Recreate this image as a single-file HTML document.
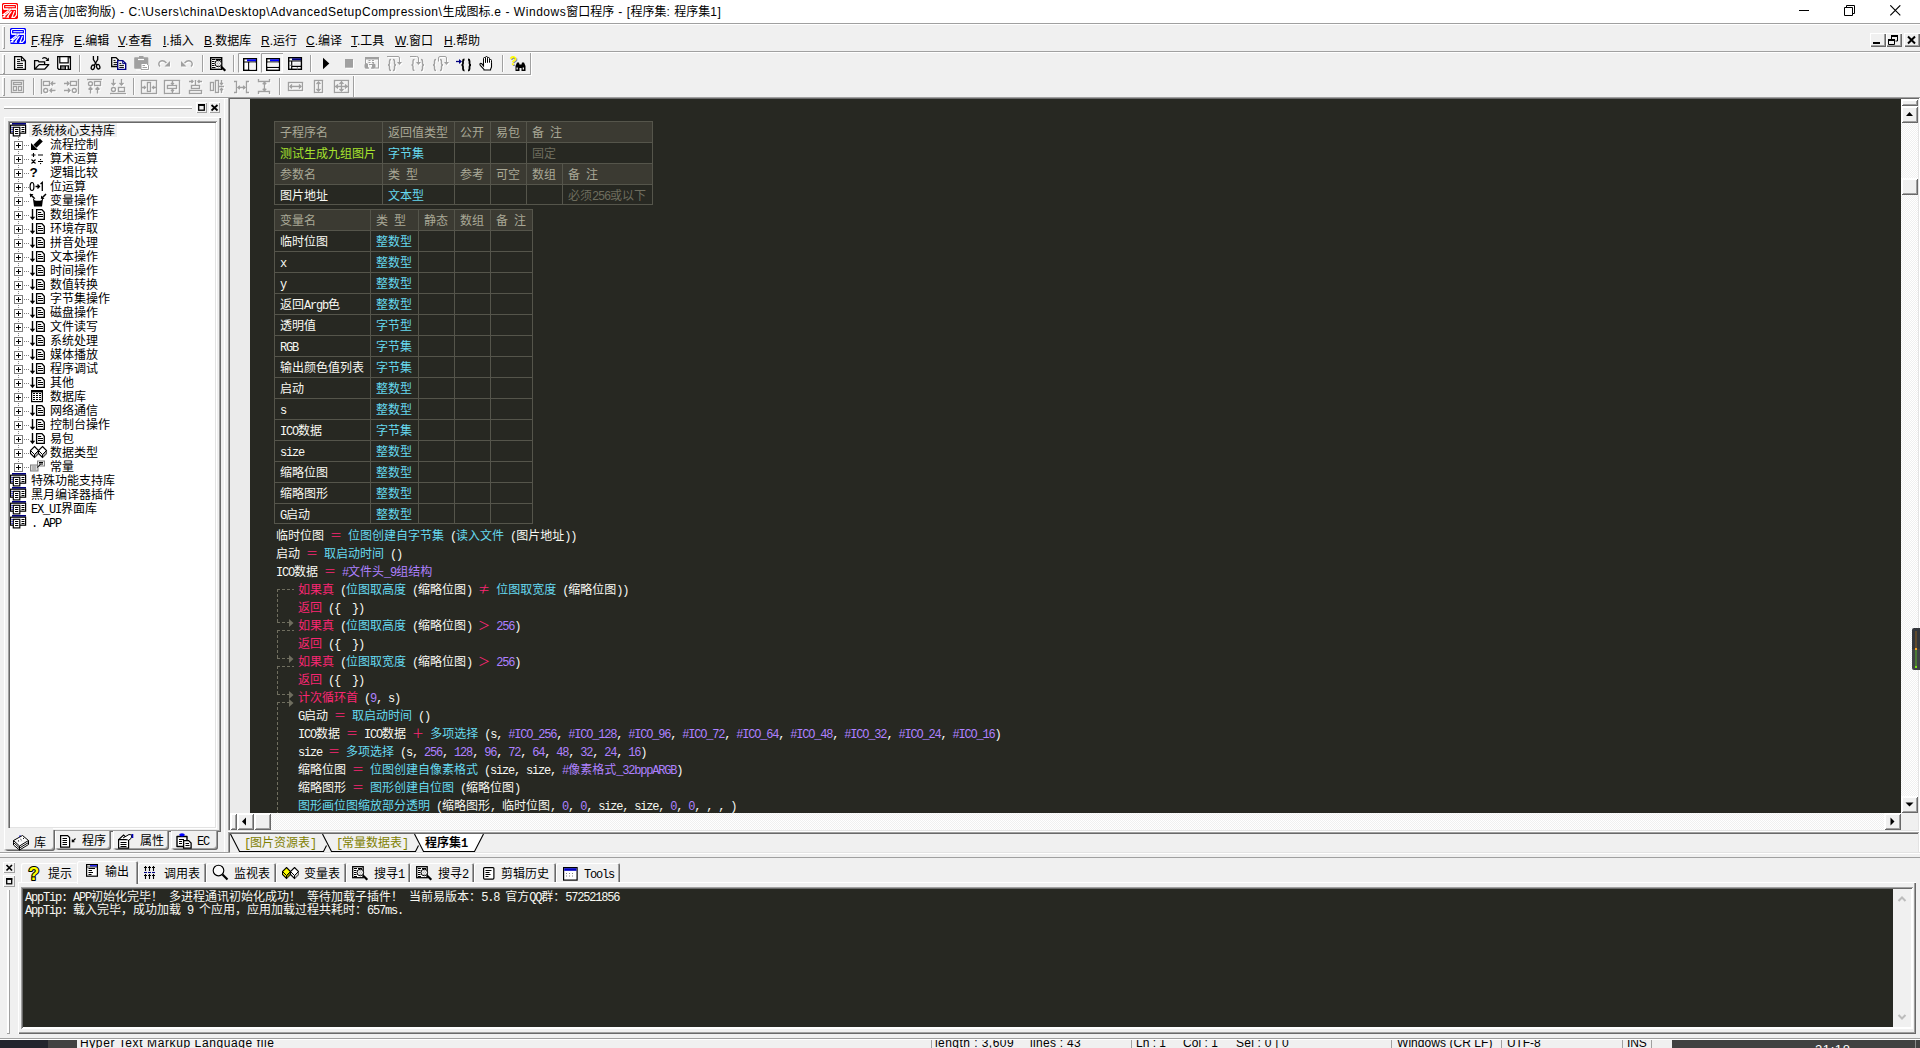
<!DOCTYPE html>
<html lang="zh-CN"><head><meta charset="utf-8"><title>易语言</title>
<style>

html,body{margin:0;padding:0}
body{width:1920px;height:1048px;overflow:hidden;position:relative;background:#f0f0f0;
 font-family:"Liberation Sans","Noto Sans CJK SC",sans-serif;font-size:12px;color:#000}
div,span,i,b,svg{position:absolute;box-sizing:border-box}
i{position:static;font-style:normal;font-family:"Liberation Mono",monospace;letter-spacing:-1.2px}
b{position:static}
.ss{font-family:"Liberation Mono","Noto Sans CJK SC",monospace;font-size:12px;white-space:pre;line-height:18px}
.tx{white-space:pre}
/* code colours */
.k{color:#f92672;position:static}
.f{color:#66d9ef;position:static}
.c{color:#ae81ff;position:static}
.w{color:#f8f8f2;position:static}
.g{color:#a6e22e;position:static}

.b3{background:#f0f0f0;box-shadow:inset 1px 1px 0 #fff,inset -1px -1px 0 #696969,inset -2px -2px 0 #a0a0a0}
.hl{height:1px;left:0;width:1920px}
#title{left:0;top:0;width:1920px;height:23px;background:#fff}
#ttext{left:23px;top:4px;height:16px;line-height:16px;white-space:pre;font-size:12px;color:#000}
.mi{top:33px;height:16px;line-height:16px;white-space:pre;font-size:12px}
.mi u{text-decoration:underline;text-underline-offset:1px}
.grip{width:3px;background:#f0f0f0;box-shadow:inset 1px 1px 0 #fff,inset -1px -1px 0 #a0a0a0}
.sep{width:2px;border-left:1px solid #a0a0a0;border-right:1px solid #fff}

#ttext b{font-weight:normal;letter-spacing:.54px}

.tree{left:8px;top:121px;width:209px;height:708px;background:#fff;box-shadow:inset 1px 1px 0 #a0a0a0,inset -1px -1px 0 #fff,inset 2px 2px 0 #696969,inset -2px -2px 0 #e3e3e3}
.tr{left:0;height:14px;line-height:18px;font-size:12px;white-space:pre;font-family:"Liberation Mono","Noto Sans CJK SC",monospace}
.tr span{position:static}
.pm{width:9px;height:9px;border:1px solid #808080;background:#fff}
.pm:before{content:"";position:absolute;left:1px;top:3px;width:5px;height:1px;background:#000}
.pm:after{content:"";position:absolute;left:3px;top:1px;width:1px;height:5px;background:#000}
.ltab{top:831px;height:19px;background:#f0f0f0;border-radius:0 0 3px 3px;box-shadow:inset 1px 0 0 #fff,inset -1px -1px 0 #696969,inset -2px -2px 0 #a0a0a0}
.lt{font-size:12px;line-height:18px;white-space:pre;font-family:"Liberation Mono","Noto Sans CJK SC",monospace}

#ed{left:230px;top:99px;width:1671px;height:714px;background:#272822;overflow:hidden}
.cd{font-family:"Liberation Mono","Noto Sans CJK SC",monospace;font-size:12px;line-height:22px;height:18px;white-space:pre;color:#f8f8f2}
.cd span{position:static}
.tb{background:#55554b}
.tb div{height:20px;line-height:24px;font-family:"Liberation Mono","Noto Sans CJK SC",monospace;font-size:12px;white-space:pre;padding-left:5px;overflow:hidden}
.th{background:#3b3a32;color:#a9a896}
.td{background:#272822;color:#f8f8f2}
.sbv{background:#f7f7f7}

.trk{background-color:#fff;background-image:linear-gradient(45deg,#f0f0f0 25%,transparent 25%,transparent 75%,#f0f0f0 75%),linear-gradient(45deg,#f0f0f0 25%,transparent 25%,transparent 75%,#f0f0f0 75%);background-size:2px 2px;background-position:0 0,1px 1px}
.sbb{background:#f0f0f0;box-shadow:inset 1px 1px 0 #fff,inset -1px -1px 0 #696969,inset 2px 2px 0 #fff,inset -2px -2px 0 #a0a0a0}
.etab{top:834px;height:18px;line-height:20px;font-size:12px;white-space:pre;font-family:"Liberation Mono","Noto Sans CJK SC",monospace}

.btab{top:863px;height:19px;background:#f0f0f0;box-shadow:inset 1px 1px 0 #fff,inset -1px 0 0 #696969,inset -2px 0 0 #a0a0a0;border-radius:2px 2px 0 0}
.bt{font-size:12px;line-height:18px;white-space:pre;font-family:"Liberation Mono","Noto Sans CJK SC",monospace}
#out{left:23px;top:889px;width:1870px;height:138px;background:#272822;overflow:hidden}
.ol{left:2px;height:13px;line-height:17px;font-size:12px;white-space:pre;color:#f8f8f2;font-family:"Liberation Mono","Noto Sans CJK SC",monospace}
.sb{top:-5px;height:16px;line-height:16px;font-size:12px;white-space:pre;color:#000;letter-spacing:.6px}

.fw{position:static;line-height:0;font-family:"Noto Sans CJK SC",sans-serif}

</style></head>
<body>
<div id="title"><svg style="left:2px;top:3px" width="16" height="16" viewBox="0 0 16 16"><path d="M1 0h14l1 1v14l-1 1h-14l-1-1v-14z" fill="#ff0000"/><rect x="1.500" y="1.500" width="13" height="4.600" rx="1.200" fill="none" stroke="#fff" stroke-width="1.100"/><path d="M3.300 3.700h9.500" stroke="#fff" stroke-width="1"/><path d="M1.500 6.200h4.700M10 6.200h4.500M6.500 7.500l-5.300 4h2M8.800 6l-1.500 1.800M7.500 8.500l-6.300 5.300h2.300M9.500 8.200l-4.300 6h1.800M12.500 8l-2.500 6.300h2.500l2-2.300v-6" stroke="#fff" stroke-width="1.200" fill="none"/></svg><span id="ttext">易语言<b>(</b>加密狗版<b>) - C:\Users\china\Desktop\AdvancedSetupCompression\</b>生成图标<b>.e - Windows</b>窗口程序<b> - [</b>程序集<b>: </b>程序集<b>1]</b></span><svg style="left:1799px;top:5px" width="102" height="11" viewBox="0 0 102 11"><path d="M0 5.5h10" stroke="#000"/><path d="M45.5 2.5h8v8h-8zM47.5 2.5v-2h8v8h-2" fill="none" stroke="#000"/><path d="M91.3 0.3l10 10M101.3 0.3l-10 10" stroke="#000" stroke-width="1.1"/></svg></div>
<div class="hl" style="top:23px;background:#a0a0a0"></div><div class="hl" style="top:24px;background:#fff"></div>
<div class="grip" style="left:2px;top:26px;height:23px"></div>
<svg style="left:10px;top:28px" width="16" height="16" viewBox="0 0 16 16"><path d="M1 0h14l1 1v14l-1 1h-14l-1-1v-14z" fill="#0000ff"/><rect x="1.500" y="1.500" width="13" height="4.600" rx="1.200" fill="none" stroke="#fff" stroke-width="1.100"/><path d="M3.300 3.700h9.500" stroke="#fff" stroke-width="1"/><path d="M1.500 6.200h4.700M10 6.200h4.500M6.500 7.500l-5.300 4h2M8.800 6l-1.500 1.800M7.500 8.500l-6.300 5.300h2.300M9.500 8.200l-4.300 6h1.800M12.500 8l-2.500 6.300h2.500l2-2.300v-6" stroke="#fff" stroke-width="1.200" fill="none"/></svg>
<span class="mi" style="left:31px"><u>F</u>.程序</span>
<span class="mi" style="left:74px"><u>E</u>.编辑</span>
<span class="mi" style="left:118px"><u>V</u>.查看</span>
<span class="mi" style="left:163px"><u>I</u>.插入</span>
<span class="mi" style="left:204px"><u>B</u>.数据库</span>
<span class="mi" style="left:261px"><u>R</u>.运行</span>
<span class="mi" style="left:306px"><u>C</u>.编译</span>
<span class="mi" style="left:351px"><u>T</u>.工具</span>
<span class="mi" style="left:395px"><u>W</u>.窗口</span>
<span class="mi" style="left:444px"><u>H</u>.帮助</span>
<div class="b3" style="left:1870px;top:33px;width:16px;height:14px"><svg style="left:0;top:0" width="16" height="14"><path d="M3 10h7" stroke="#000" stroke-width="2"/></svg></div>
<div class="b3" style="left:1886px;top:33px;width:16px;height:14px"><svg style="left:0;top:0" width="16" height="14"><path d="M5.5 3h6M5.5 4v2M11.500 4v4h-2M2.500 7h6M2.5 8v3.5h6v-3.500" stroke="#000" stroke-width="1" fill="none"/><path d="M5 3h7M2 7h7" stroke="#000" stroke-width="2"/></svg></div>
<div class="b3" style="left:1904px;top:33px;width:16px;height:14px"><svg style="left:0;top:0" width="16" height="14"><path d="M4 3.500l7 7M11 3.500l-7 7" stroke="#000" stroke-width="2"/></svg></div>
<div class="hl" style="top:51px;background:#a0a0a0"></div><div class="hl" style="top:52px;background:#fff"></div>
<div class="grip" style="left:2px;top:54px;height:20px"></div>
<div class="hl" style="top:74px;background:#a0a0a0;width:531px"></div><div class="hl" style="top:75px;background:#fff;width:532px"></div>
<div class="grip" style="left:2px;top:77px;height:19px"></div>
<div class="hl" style="top:97px;background:#a0a0a0"></div><div class="hl" style="top:98px;background:#fff"></div>
<svg style="left:0;top:52px" width="540" height="46" viewBox="0 52 540 46"><path d="M79.5 55v17" stroke="#a0a0a0"/><path d="M80.5 55v17" stroke="#fff"/><path d="M202.5 55v17" stroke="#a0a0a0"/><path d="M203.5 55v17" stroke="#fff"/><path d="M233.5 55v17" stroke="#a0a0a0"/><path d="M234.5 55v17" stroke="#fff"/><path d="M310.5 55v17" stroke="#a0a0a0"/><path d="M311.5 55v17" stroke="#fff"/><path d="M502.5 55v17" stroke="#a0a0a0"/><path d="M503.5 55v17" stroke="#fff"/><path d="M530.5 53v22" stroke="#a0a0a0"/><path d="M531.5 53v22" stroke="#fff"/><path d="M33.5 78v17" stroke="#a0a0a0"/><path d="M34.5 78v17" stroke="#fff"/><path d="M133.5 78v17" stroke="#a0a0a0"/><path d="M134.5 78v17" stroke="#fff"/><path d="M279.5 78v17" stroke="#a0a0a0"/><path d="M280.5 78v17" stroke="#fff"/><path d="M353.5 76v21" stroke="#a0a0a0"/><path d="M354.5 76v21" stroke="#fff"/><path d="M14.6 56.600h6.800l4 4.200v8.600h-10.800z" fill="#fff" stroke="#000" stroke-width="1.300"/><path d="M21.400 56.600v4.200h4" fill="none" stroke="#000" stroke-width="1.100"/><path d="M17 59.400h3.200M17 61.400h3.200M17 63.400h6M17 65.400h6M17 67.400h6" stroke="#000" stroke-width="1"/><path d="M34.600 69.200v-8.600h3.400l1 1.300h5.600v2.600" fill="none" stroke="#000" stroke-width="1.300"/><path d="M34.600 69.200l4.600-4.600h9.600l-4.200 4.600z" fill="#fff" stroke="#000" stroke-width="1.300" stroke-linejoin="round"/><path d="M42.300 58.600q2.700-2.200 5.400 1" fill="none" stroke="#000" stroke-width="1.200"/><path d="M48.900 57.600v3.400h-3.400z" fill="#000"/><path d="M57.700 56.600h12.700v12.700h-11.700l-1-1z" fill="#fff" stroke="#000" stroke-width="1.300"/><path d="M59.800 56.600v6.200h8.400v-6.200" fill="none" stroke="#000" stroke-width="1.200"/><rect x="60" y="65.300" width="9" height="4.400" fill="#000"/><rect x="61.300" y="66.400" width="3.400" height="2.800" fill="#808080"/><rect x="66" y="66.400" width="1.600" height="2.800" fill="#fff"/><rect x="69" y="57.300" width="1" height="1" fill="#000"/><path d="M93.400 56v3.500l3.300 5.500M97.700 56v3.500l-3.300 5.500" fill="none" stroke="#000" stroke-width="1.300"/><ellipse cx="92.900" cy="67.300" rx="1.600" ry="2.300" fill="none" stroke="#000" stroke-width="1.300" transform="rotate(20 92.900 67.300)"/><ellipse cx="98.200" cy="66.700" rx="1.600" ry="2.300" fill="none" stroke="#000" stroke-width="1.300" transform="rotate(-20 98.200 66.700)"/><path d="M111.700 57.600h4.300l2.500 2.500v6.400h-6.800z" fill="#fff" stroke="#000" stroke-width="1.300"/><path d="M113.500 60.400h2M113.500 62.400h4M113.500 64.400h4" stroke="#000"/><path d="M117.700 60.600h5l3 3v5.800h-8z" fill="#fff" stroke="#000080" stroke-width="1.400"/><path d="M122.700 60.600v3h3" fill="none" stroke="#000080"/><path d="M119.300 63.400h2M119.300 65.400h4.600M119.300 67.400h4.600" stroke="#000"/><path d="M135 58h12.500v10h-12.500z" fill="#a0a0a0" stroke="#a0a0a0" stroke-width="1.600" stroke-linejoin="round"/><rect x="139" y="56" width="4.500" height="2" fill="#a0a0a0"/><path d="M138 59.500h6" stroke="#fff" stroke-width="1.200"/><path d="M141 63.500h5.500l2 2v4h-7.500z" fill="#fff" stroke="#a0a0a0"/><path d="M142.500 65.500h2.500M142.500 67.500h4.500" stroke="#a0a0a0"/><path d="M136 70h5M149.500 66v4.500h-8" stroke="#fff" fill="none"/><g transform="translate(1,1)" stroke="#fff" fill="none" color="#fff"><path d="M160 66.500q-2.500-2.500 0-5 3-2 6.500 1.500" stroke-width="1.400"/><path d="M170 61v5.500h-5.500z" fill="currentColor" stroke="none"/></g><g stroke="#a0a0a0" fill="none" color="#a0a0a0"><path d="M160 66.500q-2.500-2.500 0-5 3-2 6.500 1.500" stroke-width="1.400"/><path d="M170 61v5.500h-5.500z" fill="currentColor" stroke="none"/></g><g transform="translate(1,1)" stroke="#fff" fill="none" color="#fff"><path d="M191 66.500q2.500-2.500 0-5-3-2-6.500 1.500" stroke-width="1.400"/><path d="M181 61v5.500h5.500z" fill="currentColor" stroke="none"/></g><g stroke="#a0a0a0" fill="none" color="#a0a0a0"><path d="M191 66.500q2.500-2.500 0-5-3-2-6.500 1.500" stroke-width="1.400"/><path d="M181 61v5.500h5.500z" fill="currentColor" stroke="none"/></g><rect x="210.700" y="57.700" width="11" height="11.600" fill="#fff" stroke="#000" stroke-width="1.400"/><path d="M212 59.500h3.500M212 61.500h2.500M212 63.500h2.500M212 65.500h2.500M212 67.500h3.500M216 59.500h5" stroke="#000"/><circle cx="218.300" cy="63.500" r="3.300" fill="#f0f0f0" stroke="#000" stroke-width="1"/><path d="M217.500 61.800h1.600M216.800 63.500h.8M219 63.500h.8M217.500 65.300h1.600" stroke="#808080" stroke-width=".8"/><path d="M221 66.500l4.300 4.200" stroke="#000" stroke-width="2.200"/><rect x="238" y="53" width="22" height="20" fill="#f8f8f8"/><path d="M238.5 73v-19.500h21.500" fill="none" stroke="#a0a0a0"/><path d="M259.5 54v18.500h-21" fill="none" stroke="#fff"/><rect x="261" y="53" width="22" height="20" fill="#f8f8f8"/><path d="M261.5 73v-19.500h21.500" fill="none" stroke="#a0a0a0"/><path d="M282.5 54v18.500h-21" fill="none" stroke="#fff"/><rect x="243.700" y="58.700" width="12.700" height="11.600" fill="#fff" stroke="#000" stroke-width="1.400"/><rect x="247" y="59.300" width="9" height="2" fill="#0000ff"/><path d="M243.500 62h13M248.700 62v8.500" stroke="#000" stroke-width="1.200"/><rect x="249.500" y="62.700" width="6.300" height="7" fill="#f4f4f4"/><rect x="266.700" y="58.700" width="12.700" height="11.600" fill="#fff" stroke="#000" stroke-width="1.400"/><rect x="270" y="59.300" width="9" height="2" fill="#0000ff"/><path d="M266.500 62h13M266.500 67.400h13" stroke="#000" stroke-width="1.200"/><rect x="267.500" y="62.700" width="11.300" height="4" fill="#f4f4f4"/><rect x="288.700" y="57.700" width="12.700" height="11.600" fill="#fff" stroke="#000" stroke-width="1.400"/><rect x="292" y="58.300" width="9" height="2" fill="#000080"/><path d="M288.500 61h13M291.700 61v8.500M291.700 66.400h10" stroke="#000" stroke-width="1.200"/><path d="M289 65.300h2.500M297.300 67v2.500" stroke="#808080"/><rect x="293.800" y="62.800" width="6" height="2.200" fill="#ececec"/><path d="M323 57.700v11.600l6.300-5.800z" fill="#000"/><rect x="346" y="60" width="8" height="8.700" fill="#fff"/><rect x="345" y="59" width="8" height="8.700" fill="#a0a0a0"/><g transform="translate(1,1)" stroke="#fff" fill="none" color="#fff"><rect x="365.500" y="57.500" width="13" height="10.500"/><path d="M365 58.500h14" stroke-width="2"/><path d="M368.500 60.500h2M372 60.500h2M368.500 62.500h2M372 62.500h2M369 64.500h4"/><path d="M364.500 64.500l2-1.500 1.500 1v3l2 2.500 2-2.500v-3l1.500-1 2 1.500v3l-2 1h-7l-2-1z" fill="currentColor" stroke="none"/></g><g stroke="#a0a0a0" fill="none" color="#a0a0a0"><rect x="365.500" y="57.500" width="13" height="10.500"/><path d="M365 58.500h14" stroke-width="2"/><path d="M368.500 60.500h2M372 60.500h2M368.500 62.500h2M372 62.500h2M369 64.500h4"/><path d="M364.500 64.500l2-1.500 1.500 1v3l2 2.500 2-2.500v-3l1.500-1 2 1.500v3l-2 1h-7l-2-1z" fill="currentColor" stroke="none"/></g><path d="M370 66.500l1.300 1.500-1.300 1.500-1.300-1.500z" fill="#fff"/><g transform="translate(1,1)" stroke="#fff" fill="none" color="#fff"><path d="M391 59.5q-1.500 0-1.500 1.500v2.5q0 1.500-1.500 1.500q1.500 0 1.500 1.500v2.5q0 1.500 1.500 1.500M393 59.5q1.500 0 1.500 1.500v2.5q0 1.500 1.500 1.500q-1.500 0-1.500 1.500v2.5q0 1.500-1.500 1.500" stroke-width="1.400"/><path d="M387 56.500h11q1.500 0 1.500 1.500v5" /><path d="M397 62h5l-2.500 3z" fill="currentColor" stroke="none"/></g><g stroke="#a0a0a0" fill="none" color="#a0a0a0"><path d="M391 59.5q-1.500 0-1.500 1.500v2.5q0 1.500-1.500 1.500q1.500 0 1.500 1.500v2.5q0 1.500 1.500 1.500M393 59.5q1.500 0 1.500 1.500v2.5q0 1.500 1.500 1.500q-1.500 0-1.500 1.500v2.5q0 1.500-1.500 1.500" stroke-width="1.400"/><path d="M387 56.500h11q1.500 0 1.500 1.500v5" /><path d="M397 62h5l-2.500 3z" fill="currentColor" stroke="none"/></g><g transform="translate(1,1)" stroke="#fff" fill="none" color="#fff"><path d="M414.5 59.5q-1.500 0-1.500 1.500v2.5q0 1.500-1.500 1.500q1.500 0 1.500 1.500v2.5q0 1.500 1.500 1.500M421 59.5q1.500 0 1.500 1.500v2.5q0 1.500 1.500 1.500q-1.500 0-1.500 1.500v2.5q0 1.500-1.500 1.500" stroke-width="1.400"/><path d="M410 56.500h6.500q2 0 2 1.500v5"/><path d="M416 62h5l-2.500 3z" fill="currentColor" stroke="none"/></g><g stroke="#a0a0a0" fill="none" color="#a0a0a0"><path d="M414.5 59.5q-1.500 0-1.500 1.500v2.5q0 1.500-1.500 1.500q1.500 0 1.500 1.500v2.5q0 1.500 1.500 1.500M421 59.5q1.500 0 1.500 1.500v2.5q0 1.500 1.500 1.500q-1.500 0-1.500 1.500v2.5q0 1.500-1.500 1.500" stroke-width="1.400"/><path d="M410 56.500h6.500q2 0 2 1.500v5"/><path d="M416 62h5l-2.500 3z" fill="currentColor" stroke="none"/></g><g transform="translate(1,1)" stroke="#fff" fill="none" color="#fff"><path d="M436 59.5q-1.500 0-1.500 1.500v2.5q0 1.500-1.500 1.500q1.500 0 1.500 1.500v2.5q0 1.500 1.500 1.500M440 59.5q1.500 0 1.500 1.500v2.5q0 1.500 1.500 1.500q-1.500 0-1.500 1.500v2.5q0 1.500-1.500 1.500" stroke-width="1.400"/><path d="M438.500 61.500v-3.500q0-1.500 1.500-1.500h5q1.500 0 1.500 1.500v4"/><path d="M444 62h5l-2.500 3z" fill="currentColor" stroke="none"/></g><g stroke="#a0a0a0" fill="none" color="#a0a0a0"><path d="M436 59.5q-1.500 0-1.500 1.500v2.5q0 1.500-1.500 1.500q1.500 0 1.500 1.500v2.5q0 1.500 1.500 1.500M440 59.5q1.500 0 1.500 1.500v2.5q0 1.500 1.500 1.500q-1.500 0-1.500 1.500v2.5q0 1.500-1.500 1.500" stroke-width="1.400"/><path d="M438.500 61.500v-3.500q0-1.500 1.500-1.500h5q1.500 0 1.500 1.500v4"/><path d="M444 62h5l-2.500 3z" fill="currentColor" stroke="none"/></g><path d="M456 61.500h5" stroke="#000080" stroke-width="1.300"/><path d="M459 59l3 2.500-3 2.500z" fill="#000080"/><path d="M464.5 59.5q-1.500 0-1.500 1.500v2.5q0 1.500-1.500 1.500q1.500 0 1.500 1.500v2.5q0 1.500 1.500 1.500M468 59.5q1.500 0 1.500 1.500v2.5q0 1.500 1.500 1.500q-1.500 0-1.500 1.500v2.5q0 1.500-1.500 1.500" fill="none" stroke="#000" stroke-width="1.800"/><g fill="#fff" stroke="#000" stroke-width="1"><rect x="483.500" y="57.500" width="2" height="9" rx="1"/><rect x="485.500" y="56.500" width="2" height="10" rx="1"/><rect x="487.500" y="57.500" width="2" height="9" rx="1"/><rect x="489.500" y="59.500" width="2" height="8" rx="1"/><path d="M483.500 63v3l-1.800-2.300q-1-.8-1.600 0-.4.800.2 1.600l3.700 4.200v.5h6.500v-.5l1-2.500v-4.500" stroke-width="1.100"/></g><text x="510.500" y="65.500" font-family="Liberation Sans,sans-serif" font-weight="bold" font-size="12" fill="#808080">?</text><text x="509.800" y="64.800" font-family="Liberation Sans,sans-serif" font-weight="bold" font-size="12" fill="#ffff00">?</text><path d="M515.500 71v-5l1.500-3.500h2l.5 2h2l.5-2h2l1.500 3.500v5h-4v-3h-2v3z" fill="#000"/><path d="M516.500 67.500h1.300v2h-1.300zM522.700 67.500h1.300v2h-1.300z" fill="#f0f0f0"/><g transform="translate(1,1)" stroke="#fff" fill="none" color="#fff"><g stroke-width="1.35"><rect x="11.500" y="80.500" width="12" height="12"/><rect x="13.500" y="82.500" width="8" height="2"/><rect x="13.500" y="86.500" width="3" height="4"/><rect x="18.500" y="86.500" width="3" height="4"/><path d="M41.500 79v15"/><rect x="43.500" y="81.500" width="6" height="4"/><circle cx="45.700" cy="90.500" r="2"/><path d="M55.5 83.5L51 83.5M53.0 81.5L51 83.5L53.0 85.5M55.5 90.5L50 90.5M52.0 88.5L50 90.5L52.0 92.5"/><path d="M78.500 79v15"/><rect x="70.500" y="81.500" width="6" height="4"/><circle cx="74.300" cy="90.500" r="2"/><path d="M64 83.5L69 83.5M67.0 85.5L69 83.5L67.0 81.5M64 90.5L70 90.5M68.0 92.5L70 90.5L68.0 88.5"/><path d="M87 79.500h15"/><circle cx="90.500" cy="83.700" r="2"/><rect x="94.500" y="81.500" width="6" height="4"/><path d="M90.5 93.5L90.5 87.5M92.5 89.5L90.5 87.5L88.5 89.5M97.5 93.5L97.5 87.5M99.5 89.5L97.5 87.5L95.5 89.5"/><path d="M110 93.500h16"/><circle cx="113.500" cy="89.500" r="2"/><rect x="118.500" y="87.500" width="6" height="4"/><path d="M113.5 79L113.5 85M111.5 83.0L113.5 85L115.5 83.0M121.5 79L121.5 85M119.5 83.0L121.5 85L123.5 83.0"/><rect x="141.500" y="80.500" width="15" height="13"/><rect x="147.500" y="82.500" width="3" height="9"/><path d="M142 87.5L145.5 87.5M144.0 89.0L145.5 87.5L144.0 86.0M156 87.5L152.5 87.5M154.0 86.0L152.5 87.5L154.0 89.0"/><rect x="164.500" y="80.500" width="15" height="13"/><rect x="167.500" y="85.500" width="9" height="3"/><path d="M172.5 81L172.5 84.5M171.0 83.0L172.5 84.5L174.0 83.0M172.5 93L172.5 89.5M174.0 91.0L172.5 89.5L171.0 91.0"/><path d="M195.500 80v5.500"/><rect x="191.500" y="85.500" width="8" height="3"/><rect x="189.500" y="90.500" width="12" height="3"/><path d="M189 81.5L193 81.5M191.5 83.0L193 81.5L191.5 80.0M202 81.5L198 81.5M199.5 80.0L198 81.5L199.5 83.0"/><rect x="210.500" y="82.500" width="3" height="8"/><rect x="215.500" y="80.500" width="3" height="12"/><path d="M219 86.500h5M221.5 80L221.5 84.5M220.0 83.0L221.5 84.5L223.0 83.0M221.5 93L221.5 88.5M223.0 90.0L221.5 88.5L220.0 90.0"/><path d="M234 81.500h2.500v11h-2.500M249 81.500h-2.500v11h2.500M241 87.5L238 87.5M239.8 85.7L238 87.5L239.8 89.3M241 87.5L245 87.5M243.2 89.3L245 87.5L243.2 85.7"/><path d="M258.500 79v2.500h11v-2.500M258.500 94v-2.500h11v2.500M264.5 86L264.5 82.5M266.3 84.3L264.5 82.5L262.7 84.3M264.5 86L264.5 90.5M262.7 88.7L264.5 90.5L266.3 88.7"/><rect x="288.500" y="82.500" width="14" height="8"/><path d="M295 86.5L290 86.5M292.0 84.5L290 86.5L292.0 88.5M295 86.5L301 86.5M299.0 88.5L301 86.5L299.0 84.5"/><rect x="314.500" y="80.500" width="8" height="12"/><path d="M318.5 86L318.5 82M320.5 84.0L318.5 82L316.5 84.0M318.5 86L318.5 91M316.5 89.0L318.5 91L320.5 89.0"/><rect x="334.500" y="80.500" width="14" height="12"/><path d="M334.500 86.500h14M341.500 80.500v12M341 86.5L336 86.5M338.0 84.5L336 86.5L338.0 88.5M341 86.5L347 86.5M345.0 88.5L347 86.5L345.0 84.5M341.5 86L341.5 82M343.5 84.0L341.5 82L339.5 84.0M341.5 86L341.5 91M339.5 89.0L341.5 91L343.5 89.0"/></g></g><g stroke="#a0a0a0" fill="none" color="#a0a0a0"><g stroke-width="1.35"><rect x="11.500" y="80.500" width="12" height="12"/><rect x="13.500" y="82.500" width="8" height="2"/><rect x="13.500" y="86.500" width="3" height="4"/><rect x="18.500" y="86.500" width="3" height="4"/><path d="M41.500 79v15"/><rect x="43.500" y="81.500" width="6" height="4"/><circle cx="45.700" cy="90.500" r="2"/><path d="M55.5 83.5L51 83.5M53.0 81.5L51 83.5L53.0 85.5M55.5 90.5L50 90.5M52.0 88.5L50 90.5L52.0 92.5"/><path d="M78.500 79v15"/><rect x="70.500" y="81.500" width="6" height="4"/><circle cx="74.300" cy="90.500" r="2"/><path d="M64 83.5L69 83.5M67.0 85.5L69 83.5L67.0 81.5M64 90.5L70 90.5M68.0 92.5L70 90.5L68.0 88.5"/><path d="M87 79.500h15"/><circle cx="90.500" cy="83.700" r="2"/><rect x="94.500" y="81.500" width="6" height="4"/><path d="M90.5 93.5L90.5 87.5M92.5 89.5L90.5 87.5L88.5 89.5M97.5 93.5L97.5 87.5M99.5 89.5L97.5 87.5L95.5 89.5"/><path d="M110 93.500h16"/><circle cx="113.500" cy="89.500" r="2"/><rect x="118.500" y="87.500" width="6" height="4"/><path d="M113.5 79L113.5 85M111.5 83.0L113.5 85L115.5 83.0M121.5 79L121.5 85M119.5 83.0L121.5 85L123.5 83.0"/><rect x="141.500" y="80.500" width="15" height="13"/><rect x="147.500" y="82.500" width="3" height="9"/><path d="M142 87.5L145.5 87.5M144.0 89.0L145.5 87.5L144.0 86.0M156 87.5L152.5 87.5M154.0 86.0L152.5 87.5L154.0 89.0"/><rect x="164.500" y="80.500" width="15" height="13"/><rect x="167.500" y="85.500" width="9" height="3"/><path d="M172.5 81L172.5 84.5M171.0 83.0L172.5 84.5L174.0 83.0M172.5 93L172.5 89.5M174.0 91.0L172.5 89.5L171.0 91.0"/><path d="M195.500 80v5.500"/><rect x="191.500" y="85.500" width="8" height="3"/><rect x="189.500" y="90.500" width="12" height="3"/><path d="M189 81.5L193 81.5M191.5 83.0L193 81.5L191.5 80.0M202 81.5L198 81.5M199.5 80.0L198 81.5L199.5 83.0"/><rect x="210.500" y="82.500" width="3" height="8"/><rect x="215.500" y="80.500" width="3" height="12"/><path d="M219 86.500h5M221.5 80L221.5 84.5M220.0 83.0L221.5 84.5L223.0 83.0M221.5 93L221.5 88.5M223.0 90.0L221.5 88.5L220.0 90.0"/><path d="M234 81.500h2.500v11h-2.500M249 81.500h-2.500v11h2.500M241 87.5L238 87.5M239.8 85.7L238 87.5L239.8 89.3M241 87.5L245 87.5M243.2 89.3L245 87.5L243.2 85.7"/><path d="M258.500 79v2.500h11v-2.500M258.500 94v-2.500h11v2.500M264.5 86L264.5 82.5M266.3 84.3L264.5 82.5L262.7 84.3M264.5 86L264.5 90.5M262.7 88.7L264.5 90.5L266.3 88.7"/><rect x="288.500" y="82.500" width="14" height="8"/><path d="M295 86.5L290 86.5M292.0 84.5L290 86.5L292.0 88.5M295 86.5L301 86.5M299.0 88.5L301 86.5L299.0 84.5"/><rect x="314.500" y="80.500" width="8" height="12"/><path d="M318.5 86L318.5 82M320.5 84.0L318.5 82L316.5 84.0M318.5 86L318.5 91M316.5 89.0L318.5 91L320.5 89.0"/><rect x="334.500" y="80.500" width="14" height="12"/><path d="M334.500 86.500h14M341.500 80.500v12M341 86.5L336 86.5M338.0 84.5L336 86.5L338.0 88.5M341 86.5L347 86.5M345.0 88.5L347 86.5L345.0 84.5M341.5 86L341.5 82M343.5 84.0L341.5 82L339.5 84.0M341.5 86L341.5 91M339.5 89.0L341.5 91L343.5 89.0"/></g></g></svg>
<div style="left:4px;top:106px;width:188px;height:2px;background:#fff"></div><div style="left:4px;top:108px;width:188px;height:1px;background:#a0a0a0"></div><div style="left:196px;top:102px;width:11px;height:11px;background:#f0f0f0;box-shadow:inset 1px 1px 0 #fff,inset -1px -1px 0 #a0a0a0"><svg style="left:0;top:0" width="11" height="11"><rect x="2.700" y="3.200" width="5.600" height="5" fill="none" stroke="#000" stroke-width="1.300"/><path d="M2 2.800h7" stroke="#000" stroke-width="1.600"/></svg></div><div style="left:209px;top:102px;width:11px;height:11px;background:#f0f0f0;box-shadow:inset 1px 1px 0 #fff,inset -1px -1px 0 #a0a0a0"><svg style="left:0;top:0" width="11" height="11"><path d="M2.500 3l6 5.500M8.500 3l-6 5.500" stroke="#000" stroke-width="1.700"/></svg></div><div style="left:4px;top:117px;width:217px;height:715px;box-shadow:inset 1px 1px 0 #fff,inset -1px -1px 0 #696969,inset -2px -2px 0 #a0a0a0"></div><div class="tree"></div>
<div style="left:18px;top:137px;width:1px;height:340px;background:repeating-linear-gradient(#808080 0 1px,transparent 1px 2px)"></div><svg style="left:10px;top:123px" width="17" height="14" viewBox="0 0 17 14"><rect x="2" y="0" width="14" height="1.700" fill="#000080"/><rect x="0" y="0" width="2" height="1.700" fill="#fff"/><rect x="0.600" y="2.200" width="15" height="8" fill="#fff" stroke="#000" stroke-width="1.200"/><rect x="3.300" y="4.300" width="6.500" height="8.600" fill="#fff" stroke="#000" stroke-width="1.200"/><path d="M5 6.500h3.300M5 8.500h3.300M5 10.500h3.300M11.500 4.500h3M11.500 6.500h3M11.500 8.500h3" stroke="#000" stroke-width="1"/><path d="M1.500 4.500h1.200M1.500 6.500h1.200M1.500 8.500h1.200" stroke="#0000c0" stroke-width="1"/></svg><div style="left:29px;top:123px;width:88px;height:14px;background:#f0f0f0;"></div><div class="tr" style="left:31px;top:123px">系统核心支持库</div><div style="left:24px;top:145px;width:6px;height:1px;background:repeating-linear-gradient(90deg,#808080 0 1px,transparent 1px 2px)"></div><div class="pm" style="left:14px;top:141px"></div><svg style="left:30px;top:138px;overflow:visible" width="16" height="13" viewBox="0 0 16 13"><path d="M11.300 2l-6.300 6.300" stroke="#000" stroke-width="4.200"/><path d="M1 5v7h7z" fill="#000"/></svg><div class="tr" style="left:50px;top:137px">流程控制</div><div style="left:24px;top:159px;width:6px;height:1px;background:repeating-linear-gradient(90deg,#808080 0 1px,transparent 1px 2px)"></div><div class="pm" style="left:14px;top:155px"></div><svg style="left:30px;top:152px;overflow:visible" width="16" height="13" viewBox="0 0 16 13"><path d="M1.500 3h4M3.500 1v4M8 3h5M1.500 7.500l4 4M5.500 7.500l-4 4M8 9.500h5" stroke="#000" stroke-width="1.100" fill="none"/><rect x="10" y="7" width="1.100" height="1.100" fill="#000"/><rect x="10" y="11" width="1.100" height="1.100" fill="#000"/></svg><div class="tr" style="left:50px;top:151px">算术运算</div><div style="left:24px;top:173px;width:6px;height:1px;background:repeating-linear-gradient(90deg,#808080 0 1px,transparent 1px 2px)"></div><div class="pm" style="left:14px;top:169px"></div><svg style="left:30px;top:166px;overflow:visible" width="16" height="13" viewBox="0 0 16 13"><text x="-0.500" y="11" font-family="Liberation Sans,sans-serif" font-weight="bold" font-size="13.500" fill="#000">?</text></svg><div class="tr" style="left:50px;top:165px">逻辑比较</div><div style="left:24px;top:187px;width:6px;height:1px;background:repeating-linear-gradient(90deg,#808080 0 1px,transparent 1px 2px)"></div><div class="pm" style="left:14px;top:183px"></div><svg style="left:30px;top:180px;overflow:visible" width="16" height="13" viewBox="0 0 16 13"><ellipse cx="2" cy="6.500" rx="1.900" ry="4" fill="none" stroke="#000" stroke-width="1.200"/><path d="M5.500 6.500h3.500M7.500 4.500l2 2-2 2" fill="none" stroke="#000" stroke-width="1.300"/><path d="M10.500 4l1.800-1.500v8.500" fill="none" stroke="#000" stroke-width="1.300"/></svg><div class="tr" style="left:50px;top:179px">位运算</div><div style="left:24px;top:201px;width:6px;height:1px;background:repeating-linear-gradient(90deg,#808080 0 1px,transparent 1px 2px)"></div><div class="pm" style="left:14px;top:197px"></div><svg style="left:30px;top:194px;overflow:visible" width="16" height="13" viewBox="0 0 16 13"><path d="M0 0l5 5M11 5l5-5" stroke="#000" stroke-width="1.500"/><path d="M0 0h3.500l-3.500 3.500zM11 5v-3.500l3.500 3.500zM3 5h10l-1 7.500h-8z" fill="#000"/><ellipse cx="8" cy="5.500" rx="4" ry="1.300" fill="#fff"/></svg><div class="tr" style="left:50px;top:193px">变量操作</div><div style="left:24px;top:215px;width:6px;height:1px;background:repeating-linear-gradient(90deg,#808080 0 1px,transparent 1px 2px)"></div><div class="pm" style="left:14px;top:211px"></div><svg style="left:30px;top:208px;overflow:visible" width="16" height="13" viewBox="0 0 16 13"><g transform="translate(2.500,0.500)"><path d="M0 0.500v9" fill="none" stroke="#000" stroke-width="1.400"/><path d="M-2.700 8.300h5.400l-2.700 3.400z" fill="#000"/><path d="M4.100 1.100h5.300l2.400 2.600v7.100h-7.700z" fill="#fff" stroke="#000" stroke-width="1.300"/><path d="M5.500 4h3.200M5.500 6h5M5.500 8h5" stroke="#000" stroke-width="1.100"/></g></svg><div class="tr" style="left:50px;top:207px">数组操作</div><div style="left:24px;top:229px;width:6px;height:1px;background:repeating-linear-gradient(90deg,#808080 0 1px,transparent 1px 2px)"></div><div class="pm" style="left:14px;top:225px"></div><svg style="left:30px;top:222px;overflow:visible" width="16" height="13" viewBox="0 0 16 13"><g transform="translate(2.500,0.500)"><path d="M0 0.500v9" fill="none" stroke="#000" stroke-width="1.400"/><path d="M-2.700 8.300h5.400l-2.700 3.400z" fill="#000"/><path d="M4.100 1.100h5.300l2.400 2.600v7.100h-7.700z" fill="#fff" stroke="#000" stroke-width="1.300"/><path d="M5.500 4h3.200M5.500 6h5M5.500 8h5" stroke="#000" stroke-width="1.100"/></g></svg><div class="tr" style="left:50px;top:221px">环境存取</div><div style="left:24px;top:243px;width:6px;height:1px;background:repeating-linear-gradient(90deg,#808080 0 1px,transparent 1px 2px)"></div><div class="pm" style="left:14px;top:239px"></div><svg style="left:30px;top:236px;overflow:visible" width="16" height="13" viewBox="0 0 16 13"><g transform="translate(2.500,0.500)"><path d="M0 0.500v9" fill="none" stroke="#000" stroke-width="1.400"/><path d="M-2.700 8.300h5.400l-2.700 3.400z" fill="#000"/><path d="M4.100 1.100h5.300l2.400 2.600v7.100h-7.700z" fill="#fff" stroke="#000" stroke-width="1.300"/><path d="M5.500 4h3.200M5.500 6h5M5.500 8h5" stroke="#000" stroke-width="1.100"/></g></svg><div class="tr" style="left:50px;top:235px">拼音处理</div><div style="left:24px;top:257px;width:6px;height:1px;background:repeating-linear-gradient(90deg,#808080 0 1px,transparent 1px 2px)"></div><div class="pm" style="left:14px;top:253px"></div><svg style="left:30px;top:250px;overflow:visible" width="16" height="13" viewBox="0 0 16 13"><g transform="translate(2.500,0.500)"><path d="M0 0.500v9" fill="none" stroke="#000" stroke-width="1.400"/><path d="M-2.700 8.300h5.400l-2.700 3.400z" fill="#000"/><path d="M4.100 1.100h5.300l2.400 2.600v7.100h-7.700z" fill="#fff" stroke="#000" stroke-width="1.300"/><path d="M5.500 4h3.200M5.500 6h5M5.500 8h5" stroke="#000" stroke-width="1.100"/></g></svg><div class="tr" style="left:50px;top:249px">文本操作</div><div style="left:24px;top:271px;width:6px;height:1px;background:repeating-linear-gradient(90deg,#808080 0 1px,transparent 1px 2px)"></div><div class="pm" style="left:14px;top:267px"></div><svg style="left:30px;top:264px;overflow:visible" width="16" height="13" viewBox="0 0 16 13"><g transform="translate(2.500,0.500)"><path d="M0 0.500v9" fill="none" stroke="#000" stroke-width="1.400"/><path d="M-2.700 8.300h5.400l-2.700 3.400z" fill="#000"/><path d="M4.100 1.100h5.300l2.400 2.600v7.100h-7.700z" fill="#fff" stroke="#000" stroke-width="1.300"/><path d="M5.500 4h3.200M5.500 6h5M5.500 8h5" stroke="#000" stroke-width="1.100"/></g></svg><div class="tr" style="left:50px;top:263px">时间操作</div><div style="left:24px;top:285px;width:6px;height:1px;background:repeating-linear-gradient(90deg,#808080 0 1px,transparent 1px 2px)"></div><div class="pm" style="left:14px;top:281px"></div><svg style="left:30px;top:278px;overflow:visible" width="16" height="13" viewBox="0 0 16 13"><g transform="translate(2.500,0.500)"><path d="M0 0.500v9" fill="none" stroke="#000" stroke-width="1.400"/><path d="M-2.700 8.300h5.400l-2.700 3.400z" fill="#000"/><path d="M4.100 1.100h5.300l2.400 2.600v7.100h-7.700z" fill="#fff" stroke="#000" stroke-width="1.300"/><path d="M5.500 4h3.200M5.500 6h5M5.500 8h5" stroke="#000" stroke-width="1.100"/></g></svg><div class="tr" style="left:50px;top:277px">数值转换</div><div style="left:24px;top:299px;width:6px;height:1px;background:repeating-linear-gradient(90deg,#808080 0 1px,transparent 1px 2px)"></div><div class="pm" style="left:14px;top:295px"></div><svg style="left:30px;top:292px;overflow:visible" width="16" height="13" viewBox="0 0 16 13"><g transform="translate(2.500,0.500)"><path d="M0 0.500v9" fill="none" stroke="#000" stroke-width="1.400"/><path d="M-2.700 8.300h5.400l-2.700 3.400z" fill="#000"/><path d="M4.100 1.100h5.300l2.400 2.600v7.100h-7.700z" fill="#fff" stroke="#000" stroke-width="1.300"/><path d="M5.500 4h3.200M5.500 6h5M5.500 8h5" stroke="#000" stroke-width="1.100"/></g></svg><div class="tr" style="left:50px;top:291px">字节集操作</div><div style="left:24px;top:313px;width:6px;height:1px;background:repeating-linear-gradient(90deg,#808080 0 1px,transparent 1px 2px)"></div><div class="pm" style="left:14px;top:309px"></div><svg style="left:30px;top:306px;overflow:visible" width="16" height="13" viewBox="0 0 16 13"><g transform="translate(2.500,0.500)"><path d="M0 0.500v9" fill="none" stroke="#000" stroke-width="1.400"/><path d="M-2.700 8.300h5.400l-2.700 3.400z" fill="#000"/><path d="M4.100 1.100h5.300l2.400 2.600v7.100h-7.700z" fill="#fff" stroke="#000" stroke-width="1.300"/><path d="M5.500 4h3.200M5.500 6h5M5.500 8h5" stroke="#000" stroke-width="1.100"/></g></svg><div class="tr" style="left:50px;top:305px">磁盘操作</div><div style="left:24px;top:327px;width:6px;height:1px;background:repeating-linear-gradient(90deg,#808080 0 1px,transparent 1px 2px)"></div><div class="pm" style="left:14px;top:323px"></div><svg style="left:30px;top:320px;overflow:visible" width="16" height="13" viewBox="0 0 16 13"><g transform="translate(2.500,0.500)"><path d="M0 0.500v9" fill="none" stroke="#000" stroke-width="1.400"/><path d="M-2.700 8.300h5.400l-2.700 3.400z" fill="#000"/><path d="M4.100 1.100h5.300l2.400 2.600v7.100h-7.700z" fill="#fff" stroke="#000" stroke-width="1.300"/><path d="M5.500 4h3.200M5.500 6h5M5.500 8h5" stroke="#000" stroke-width="1.100"/></g></svg><div class="tr" style="left:50px;top:319px">文件读写</div><div style="left:24px;top:341px;width:6px;height:1px;background:repeating-linear-gradient(90deg,#808080 0 1px,transparent 1px 2px)"></div><div class="pm" style="left:14px;top:337px"></div><svg style="left:30px;top:334px;overflow:visible" width="16" height="13" viewBox="0 0 16 13"><g transform="translate(2.500,0.500)"><path d="M0 0.500v9" fill="none" stroke="#000" stroke-width="1.400"/><path d="M-2.700 8.300h5.400l-2.700 3.400z" fill="#000"/><path d="M4.100 1.100h5.300l2.400 2.600v7.100h-7.700z" fill="#fff" stroke="#000" stroke-width="1.300"/><path d="M5.500 4h3.200M5.500 6h5M5.500 8h5" stroke="#000" stroke-width="1.100"/></g></svg><div class="tr" style="left:50px;top:333px">系统处理</div><div style="left:24px;top:355px;width:6px;height:1px;background:repeating-linear-gradient(90deg,#808080 0 1px,transparent 1px 2px)"></div><div class="pm" style="left:14px;top:351px"></div><svg style="left:30px;top:348px;overflow:visible" width="16" height="13" viewBox="0 0 16 13"><g transform="translate(2.500,0.500)"><path d="M0 0.500v9" fill="none" stroke="#000" stroke-width="1.400"/><path d="M-2.700 8.300h5.400l-2.700 3.400z" fill="#000"/><path d="M4.100 1.100h5.300l2.400 2.600v7.100h-7.700z" fill="#fff" stroke="#000" stroke-width="1.300"/><path d="M5.500 4h3.200M5.500 6h5M5.500 8h5" stroke="#000" stroke-width="1.100"/></g></svg><div class="tr" style="left:50px;top:347px">媒体播放</div><div style="left:24px;top:369px;width:6px;height:1px;background:repeating-linear-gradient(90deg,#808080 0 1px,transparent 1px 2px)"></div><div class="pm" style="left:14px;top:365px"></div><svg style="left:30px;top:362px;overflow:visible" width="16" height="13" viewBox="0 0 16 13"><g transform="translate(2.500,0.500)"><path d="M0 0.500v9" fill="none" stroke="#000" stroke-width="1.400"/><path d="M-2.700 8.300h5.400l-2.700 3.400z" fill="#000"/><path d="M4.100 1.100h5.300l2.400 2.600v7.100h-7.700z" fill="#fff" stroke="#000" stroke-width="1.300"/><path d="M5.500 4h3.200M5.500 6h5M5.500 8h5" stroke="#000" stroke-width="1.100"/></g></svg><div class="tr" style="left:50px;top:361px">程序调试</div><div style="left:24px;top:383px;width:6px;height:1px;background:repeating-linear-gradient(90deg,#808080 0 1px,transparent 1px 2px)"></div><div class="pm" style="left:14px;top:379px"></div><svg style="left:30px;top:376px;overflow:visible" width="16" height="13" viewBox="0 0 16 13"><g transform="translate(2.500,0.500)"><path d="M0 0.500v9" fill="none" stroke="#000" stroke-width="1.400"/><path d="M-2.700 8.300h5.400l-2.700 3.400z" fill="#000"/><path d="M4.100 1.100h5.300l2.400 2.600v7.100h-7.700z" fill="#fff" stroke="#000" stroke-width="1.300"/><path d="M5.500 4h3.200M5.500 6h5M5.500 8h5" stroke="#000" stroke-width="1.100"/></g></svg><div class="tr" style="left:50px;top:375px">其他</div><div style="left:24px;top:397px;width:6px;height:1px;background:repeating-linear-gradient(90deg,#808080 0 1px,transparent 1px 2px)"></div><div class="pm" style="left:14px;top:393px"></div><svg style="left:30px;top:390px;overflow:visible" width="16" height="13" viewBox="0 0 16 13"><rect x="1.600" y="0.600" width="10.800" height="11" fill="#fff" stroke="#000" stroke-width="1.200"/><path d="M1.500 1.500h11" stroke="#000" stroke-width="1.800"/><path d="M3 3.500h8.500M3 5.500h8.500M3 7.500h8.500M3 9.500h8.500" stroke="#000" stroke-width="1" stroke-dasharray="2 1"/></svg><div class="tr" style="left:50px;top:389px">数据库</div><div style="left:24px;top:411px;width:6px;height:1px;background:repeating-linear-gradient(90deg,#808080 0 1px,transparent 1px 2px)"></div><div class="pm" style="left:14px;top:407px"></div><svg style="left:30px;top:404px;overflow:visible" width="16" height="13" viewBox="0 0 16 13"><g transform="translate(2.500,0.500)"><path d="M0 0.500v9" fill="none" stroke="#000" stroke-width="1.400"/><path d="M-2.700 8.300h5.400l-2.700 3.400z" fill="#000"/><path d="M4.100 1.100h5.300l2.400 2.600v7.100h-7.700z" fill="#fff" stroke="#000" stroke-width="1.300"/><path d="M5.500 4h3.200M5.500 6h5M5.500 8h5" stroke="#000" stroke-width="1.100"/></g></svg><div class="tr" style="left:50px;top:403px">网络通信</div><div style="left:24px;top:425px;width:6px;height:1px;background:repeating-linear-gradient(90deg,#808080 0 1px,transparent 1px 2px)"></div><div class="pm" style="left:14px;top:421px"></div><svg style="left:30px;top:418px;overflow:visible" width="16" height="13" viewBox="0 0 16 13"><g transform="translate(2.500,0.500)"><path d="M0 0.500v9" fill="none" stroke="#000" stroke-width="1.400"/><path d="M-2.700 8.300h5.400l-2.700 3.400z" fill="#000"/><path d="M4.100 1.100h5.300l2.400 2.600v7.100h-7.700z" fill="#fff" stroke="#000" stroke-width="1.300"/><path d="M5.500 4h3.200M5.500 6h5M5.500 8h5" stroke="#000" stroke-width="1.100"/></g></svg><div class="tr" style="left:50px;top:417px">控制台操作</div><div style="left:24px;top:439px;width:6px;height:1px;background:repeating-linear-gradient(90deg,#808080 0 1px,transparent 1px 2px)"></div><div class="pm" style="left:14px;top:435px"></div><svg style="left:30px;top:432px;overflow:visible" width="16" height="13" viewBox="0 0 16 13"><g transform="translate(2.500,0.500)"><path d="M0 0.500v9" fill="none" stroke="#000" stroke-width="1.400"/><path d="M-2.700 8.300h5.400l-2.700 3.400z" fill="#000"/><path d="M4.100 1.100h5.300l2.400 2.600v7.100h-7.700z" fill="#fff" stroke="#000" stroke-width="1.300"/><path d="M5.500 4h3.200M5.500 6h5M5.500 8h5" stroke="#000" stroke-width="1.100"/></g></svg><div class="tr" style="left:50px;top:431px">易包</div><div style="left:24px;top:453px;width:6px;height:1px;background:repeating-linear-gradient(90deg,#808080 0 1px,transparent 1px 2px)"></div><div class="pm" style="left:14px;top:449px"></div><svg style="left:30px;top:446px;overflow:visible" width="16" height="13" viewBox="0 0 16 13"><g transform="translate(0.500,0)"><path d="M4 0.500l4 4v3l-4 4-4-4v-3z" fill="#fff" stroke="#000" stroke-width="1.100"/><path d="M4 8.500l4-4v3l-4 4z" fill="#a0a0a0"/><path d="M0 4.500l4 4 4-4M4 8.500v3" fill="none" stroke="#000" stroke-width="1"/></g><g transform="translate(8.500,0)"><path d="M4 0.500l4 4v3l-4 4-4-4v-3z" fill="#fff" stroke="#000" stroke-width="1.100"/><path d="M4 8.500l4-4v3l-4 4z" fill="#a0a0a0"/><path d="M0 4.500l4 4 4-4M4 8.500v3" fill="none" stroke="#000" stroke-width="1"/></g></svg><div class="tr" style="left:50px;top:445px">数据类型</div><div style="left:24px;top:467px;width:6px;height:1px;background:repeating-linear-gradient(90deg,#808080 0 1px,transparent 1px 2px)"></div><div class="pm" style="left:14px;top:463px"></div><svg style="left:30px;top:460px;overflow:visible" width="16" height="13" viewBox="0 0 16 13"><rect x="0.500" y="5" width="7.500" height="6" fill="#d8d8d8" stroke="#808080" stroke-width="1"/><path d="M2 7h4M2 9h4" stroke="#808080" stroke-width=".8"/><rect x="7.500" y="1" width="7" height="5" fill="#f0f0f0" stroke="#808080" stroke-width="1"/><path d="M7 7.500l3.500-3M9 2.500h4M9 4h4" stroke="#000" stroke-width="1"/></svg><div class="tr" style="left:50px;top:459px">常量</div><svg style="left:10px;top:473px" width="17" height="14" viewBox="0 0 17 14"><rect x="2" y="0" width="14" height="1.700" fill="#000080"/><rect x="0" y="0" width="2" height="1.700" fill="#fff"/><rect x="0.600" y="2.200" width="15" height="8" fill="#fff" stroke="#000" stroke-width="1.200"/><rect x="3.300" y="4.300" width="6.500" height="8.600" fill="#fff" stroke="#000" stroke-width="1.200"/><path d="M5 6.500h3.300M5 8.500h3.300M5 10.500h3.300M11.500 4.500h3M11.500 6.500h3M11.500 8.500h3" stroke="#000" stroke-width="1"/><path d="M1.500 4.500h1.200M1.500 6.500h1.200M1.500 8.500h1.200" stroke="#0000c0" stroke-width="1"/></svg><div style="left:29px;top:473px;width:88px;height:14px;"></div><div class="tr" style="left:31px;top:473px">特殊功能支持库</div><svg style="left:10px;top:487px" width="17" height="14" viewBox="0 0 17 14"><rect x="2" y="0" width="14" height="1.700" fill="#000080"/><rect x="0" y="0" width="2" height="1.700" fill="#fff"/><rect x="0.600" y="2.200" width="15" height="8" fill="#fff" stroke="#000" stroke-width="1.200"/><rect x="3.300" y="4.300" width="6.500" height="8.600" fill="#fff" stroke="#000" stroke-width="1.200"/><path d="M5 6.500h3.300M5 8.500h3.300M5 10.500h3.300M11.500 4.500h3M11.500 6.500h3M11.500 8.500h3" stroke="#000" stroke-width="1"/><path d="M1.500 4.500h1.200M1.500 6.500h1.200M1.500 8.500h1.200" stroke="#0000c0" stroke-width="1"/></svg><div style="left:29px;top:487px;width:88px;height:14px;"></div><div class="tr" style="left:31px;top:487px">黑月编译器插件</div><svg style="left:10px;top:501px" width="17" height="14" viewBox="0 0 17 14"><rect x="2" y="0" width="14" height="1.700" fill="#000080"/><rect x="0" y="0" width="2" height="1.700" fill="#fff"/><rect x="0.600" y="2.200" width="15" height="8" fill="#fff" stroke="#000" stroke-width="1.200"/><rect x="3.300" y="4.300" width="6.500" height="8.600" fill="#fff" stroke="#000" stroke-width="1.200"/><path d="M5 6.500h3.300M5 8.500h3.300M5 10.500h3.300M11.500 4.500h3M11.500 6.500h3M11.500 8.500h3" stroke="#000" stroke-width="1"/><path d="M1.500 4.500h1.200M1.500 6.500h1.200M1.500 8.500h1.200" stroke="#0000c0" stroke-width="1"/></svg><div style="left:29px;top:501px;width:88px;height:14px;"></div><div class="tr" style="left:31px;top:501px"><i>EX_UI</i>界面库</div><svg style="left:10px;top:515px" width="17" height="14" viewBox="0 0 17 14"><rect x="2" y="0" width="14" height="1.700" fill="#000080"/><rect x="0" y="0" width="2" height="1.700" fill="#fff"/><rect x="0.600" y="2.200" width="15" height="8" fill="#fff" stroke="#000" stroke-width="1.200"/><rect x="3.300" y="4.300" width="6.500" height="8.600" fill="#fff" stroke="#000" stroke-width="1.200"/><path d="M5 6.500h3.300M5 8.500h3.300M5 10.500h3.300M11.500 4.500h3M11.500 6.500h3M11.500 8.500h3" stroke="#000" stroke-width="1"/><path d="M1.500 4.500h1.200M1.500 6.500h1.200M1.500 8.500h1.200" stroke="#0000c0" stroke-width="1"/></svg><div style="left:29px;top:515px;width:88px;height:14px;"></div><div class="tr" style="left:31px;top:515px"><i>. APP</i></div>
<div style="left:4px;top:830px;width:51px;height:21px;background:#f0f0f0;border-radius:0 0 3px 3px;box-shadow:inset 1px 0 0 #fff,inset -1px -1px 0 #696969,inset -2px -2px 0 #a0a0a0"></div><div style="left:5px;top:828px;width:48px;height:4px;background:#f0f0f0"></div><div class="ltab" style="left:55px;width:56px"></div><div class="ltab" style="left:113px;width:56px"></div><div class="ltab" style="left:171px;width:47px"></div><span class="lt" style="left:34px;top:835px">库</span><span class="lt" style="left:82px;top:833px">程序</span><span class="lt" style="left:140px;top:833px">属性</span><span class="lt" style="left:197px;top:833px"><i>EC</i></span><svg style="left:12px;top:834px" width="18" height="17" viewBox="0 0 18 17"><path d="M1.500 6.500l9-5 6 5-9 5.500zM1.500 6.500v2l6 5.500 9-5.500v-2M1.500 8.500v2.500l6 5 9-5.500v-2.500M7.500 12v4" fill="#fff" stroke="#000" stroke-width="1" stroke-linejoin="round"/><path d="M6 6.500l1 .8M8.500 5.200l1 .8M11 4l1 .8" stroke="#000" stroke-width="1"/><path d="M7 2.500l1.500-1" stroke="#0000c0"/></svg><svg style="left:60px;top:835px" width="18" height="13" viewBox="0 0 18 13"><path d="M0.600 0.600h7l2 2v9.500h-9z" fill="#fff" stroke="#000" stroke-width="1.200"/><path d="M2.500 3.500h4.500M2.500 5.500h4.500M2.500 7.500h4.500M2.500 9.500h4.500" stroke="#000"/><path d="M15.500 3.500l-3 3M12.300 4.500v2.200h2.200" fill="none" stroke="#000" stroke-width="1.100"/></svg><svg style="left:118px;top:834px" width="17" height="15" viewBox="0 0 17 15"><path d="M0.600 5.600h10v8.500h-10zM0.600 5.600l5-4.500 5 4.500" fill="#fff" stroke="#000" stroke-width="1.200"/><path d="M2.500 8.500h6M2.500 10.500h6M2.500 12.500h6" stroke="#000"/><path d="M5 4l6-3.500 3 .5-1 3.500-2 1.500" fill="#fff" stroke="#000" stroke-width="1"/><path d="M14.500 0v4" stroke="#0000c0" stroke-width="1.600"/></svg><svg style="left:176px;top:833px" width="16" height="16" viewBox="0 0 16 16"><path d="M1 3.500h10v10h-10z" fill="#fff" stroke="#000" stroke-width="1.400" stroke-linejoin="round"/><ellipse cx="6" cy="1.800" rx="2.800" ry="1.600" fill="#0000ff"/><path d="M3 6.500h5M3 8.500h3M3 10.500h3" stroke="#000"/><path d="M7.600 7.600h5l2.500 2.500v5h-7.500z" fill="#fff" stroke="#000" stroke-width="1.300"/><path d="M9.500 10.500h3.500M9.500 12.500h4" stroke="#000"/></svg>
<div style="left:224px;top:99px;width:1px;height:753px;background:#fff"></div><div style="left:228px;top:98px;width:1692px;height:1px;background:#696969"></div><div style="left:228px;top:98px;width:1px;height:732px;background:#a0a0a0"></div><div style="left:229px;top:98px;width:1px;height:732px;background:#696969"></div>
<div id="ed"><div style="left:0;top:0;width:20px;height:714px;background:#ebebeb"></div><div class="tb" style="left:44px;top:22px;width:379px;height:84px"><div class="th" style="left:1px;top:1px;width:107px">子程序名</div><div class="th" style="left:109px;top:1px;width:71px">返回值类型</div><div class="th" style="left:181px;top:1px;width:35px">公开</div><div class="th" style="left:217px;top:1px;width:35px">易包</div><div class="th" style="left:253px;top:1px;width:125px">备<i> </i>注</div><div class="td" style="left:1px;top:22px;width:107px;color:#a6e22e">测试生成九组图片</div><div class="td" style="left:109px;top:22px;width:71px;color:#66d9ef">字节集</div><div class="td" style="left:181px;top:22px;width:35px"></div><div class="td" style="left:217px;top:22px;width:35px"></div><div class="td" style="left:253px;top:22px;width:125px;color:#6e6d5e">固定</div><div class="th" style="left:1px;top:43px;width:107px">参数名</div><div class="th" style="left:109px;top:43px;width:71px">类<i> </i>型</div><div class="th" style="left:181px;top:43px;width:35px">参考</div><div class="th" style="left:217px;top:43px;width:35px">可空</div><div class="th" style="left:253px;top:43px;width:35px">数组</div><div class="th" style="left:289px;top:43px;width:89px">备<i> </i>注</div><div class="td" style="left:1px;top:64px;width:107px;height:19px">图片地址</div><div class="td" style="left:109px;top:64px;width:71px;height:19px;color:#66d9ef">文本型</div><div class="td" style="left:181px;top:64px;width:35px;height:19px"></div><div class="td" style="left:217px;top:64px;width:35px;height:19px"></div><div class="td" style="left:253px;top:64px;width:35px;height:19px"></div><div class="td" style="left:289px;top:64px;width:89px;height:19px;color:#6e6d5e">必须<i>256</i>或以下</div></div><div class="tb" style="left:44px;top:110px;width:259px;height:315px"><div class="th" style="left:1px;top:1px;width:95px">变量名</div><div class="th" style="left:97px;top:1px;width:47px">类<i> </i>型</div><div class="th" style="left:145px;top:1px;width:35px">静态</div><div class="th" style="left:181px;top:1px;width:35px">数组</div><div class="th" style="left:217px;top:1px;width:41px">备<i> </i>注</div><div class="td" style="left:1px;top:22px;width:95px">临时位图</div><div class="td" style="left:97px;top:22px;width:47px;color:#66d9ef">整数型</div><div class="td" style="left:145px;top:22px;width:35px"></div><div class="td" style="left:181px;top:22px;width:35px"></div><div class="td" style="left:217px;top:22px;width:41px"></div><div class="td" style="left:1px;top:43px;width:95px"><i>x</i></div><div class="td" style="left:97px;top:43px;width:47px;color:#66d9ef">整数型</div><div class="td" style="left:145px;top:43px;width:35px"></div><div class="td" style="left:181px;top:43px;width:35px"></div><div class="td" style="left:217px;top:43px;width:41px"></div><div class="td" style="left:1px;top:64px;width:95px"><i>y</i></div><div class="td" style="left:97px;top:64px;width:47px;color:#66d9ef">整数型</div><div class="td" style="left:145px;top:64px;width:35px"></div><div class="td" style="left:181px;top:64px;width:35px"></div><div class="td" style="left:217px;top:64px;width:41px"></div><div class="td" style="left:1px;top:85px;width:95px">返回<i>Argb</i>色</div><div class="td" style="left:97px;top:85px;width:47px;color:#66d9ef">整数型</div><div class="td" style="left:145px;top:85px;width:35px"></div><div class="td" style="left:181px;top:85px;width:35px"></div><div class="td" style="left:217px;top:85px;width:41px"></div><div class="td" style="left:1px;top:106px;width:95px">透明值</div><div class="td" style="left:97px;top:106px;width:47px;color:#66d9ef">字节型</div><div class="td" style="left:145px;top:106px;width:35px"></div><div class="td" style="left:181px;top:106px;width:35px"></div><div class="td" style="left:217px;top:106px;width:41px"></div><div class="td" style="left:1px;top:127px;width:95px"><i>RGB</i></div><div class="td" style="left:97px;top:127px;width:47px;color:#66d9ef">字节集</div><div class="td" style="left:145px;top:127px;width:35px"></div><div class="td" style="left:181px;top:127px;width:35px"></div><div class="td" style="left:217px;top:127px;width:41px"></div><div class="td" style="left:1px;top:148px;width:95px">输出颜色值列表</div><div class="td" style="left:97px;top:148px;width:47px;color:#66d9ef">字节集</div><div class="td" style="left:145px;top:148px;width:35px"></div><div class="td" style="left:181px;top:148px;width:35px"></div><div class="td" style="left:217px;top:148px;width:41px"></div><div class="td" style="left:1px;top:169px;width:95px">启动</div><div class="td" style="left:97px;top:169px;width:47px;color:#66d9ef">整数型</div><div class="td" style="left:145px;top:169px;width:35px"></div><div class="td" style="left:181px;top:169px;width:35px"></div><div class="td" style="left:217px;top:169px;width:41px"></div><div class="td" style="left:1px;top:190px;width:95px"><i>s</i></div><div class="td" style="left:97px;top:190px;width:47px;color:#66d9ef">整数型</div><div class="td" style="left:145px;top:190px;width:35px"></div><div class="td" style="left:181px;top:190px;width:35px"></div><div class="td" style="left:217px;top:190px;width:41px"></div><div class="td" style="left:1px;top:211px;width:95px"><i>ICO</i>数据</div><div class="td" style="left:97px;top:211px;width:47px;color:#66d9ef">字节集</div><div class="td" style="left:145px;top:211px;width:35px"></div><div class="td" style="left:181px;top:211px;width:35px"></div><div class="td" style="left:217px;top:211px;width:41px"></div><div class="td" style="left:1px;top:232px;width:95px"><i>size</i></div><div class="td" style="left:97px;top:232px;width:47px;color:#66d9ef">整数型</div><div class="td" style="left:145px;top:232px;width:35px"></div><div class="td" style="left:181px;top:232px;width:35px"></div><div class="td" style="left:217px;top:232px;width:41px"></div><div class="td" style="left:1px;top:253px;width:95px">缩略位图</div><div class="td" style="left:97px;top:253px;width:47px;color:#66d9ef">整数型</div><div class="td" style="left:145px;top:253px;width:35px"></div><div class="td" style="left:181px;top:253px;width:35px"></div><div class="td" style="left:217px;top:253px;width:41px"></div><div class="td" style="left:1px;top:274px;width:95px">缩略图形</div><div class="td" style="left:97px;top:274px;width:47px;color:#66d9ef">整数型</div><div class="td" style="left:145px;top:274px;width:35px"></div><div class="td" style="left:181px;top:274px;width:35px"></div><div class="td" style="left:217px;top:274px;width:41px"></div><div class="td" style="left:1px;top:295px;width:95px;height:19px"><i>G</i>启动</div><div class="td" style="left:97px;top:295px;width:47px;height:19px;color:#66d9ef">整数型</div><div class="td" style="left:145px;top:295px;width:35px;height:19px"></div><div class="td" style="left:181px;top:295px;width:35px;height:19px"></div><div class="td" style="left:217px;top:295px;width:41px;height:19px"></div></div><div class="cd" style="left:46px;top:427px"><span class="w">临时位图<i> </i></span><span class="k">＝</span><span class="w"><i> </i></span><span class="f">位图创建自字节集</span><span class="w"><i> (</i></span><span class="f">读入文件</span><span class="w"><i> (</i>图片地址<i>))</i></span></div><div class="cd" style="left:46px;top:445px"><span class="w">启动<i> </i></span><span class="k">＝</span><span class="w"><i> </i></span><span class="f">取启动时间</span><span class="w"><i> ()</i></span></div><div class="cd" style="left:46px;top:463px"><span class="w"><i>ICO</i>数据<i> </i></span><span class="k">＝</span><span class="w"><i> </i></span><span class="c"><i>#</i>文件头<i>_9</i>组结构</span></div><div class="cd" style="left:68px;top:481px"><span class="k">如果真</span><span class="w"><i> (</i></span><span class="f">位图取高度</span><span class="w"><i> (</i>缩略位图<i>) </i></span><span class="k"><span class="fw">≠</span></span><span class="w"><i> </i></span><span class="f">位图取宽度</span><span class="w"><i> (</i>缩略位图<i>))</i></span></div><div class="cd" style="left:68px;top:499px"><span class="k">返回</span><span class="w"><i> ({  })</i></span></div><div class="cd" style="left:68px;top:517px"><span class="k">如果真</span><span class="w"><i> (</i></span><span class="f">位图取高度</span><span class="w"><i> (</i>缩略位图<i>) </i></span><span class="k">＞</span><span class="w"><i> </i></span><span class="c"><i>256</i></span><span class="w"><i>)</i></span></div><div class="cd" style="left:68px;top:535px"><span class="k">返回</span><span class="w"><i> ({  })</i></span></div><div class="cd" style="left:68px;top:553px"><span class="k">如果真</span><span class="w"><i> (</i></span><span class="f">位图取宽度</span><span class="w"><i> (</i>缩略位图<i>) </i></span><span class="k">＞</span><span class="w"><i> </i></span><span class="c"><i>256</i></span><span class="w"><i>)</i></span></div><div class="cd" style="left:68px;top:571px"><span class="k">返回</span><span class="w"><i> ({  })</i></span></div><div class="cd" style="left:68px;top:589px"><span class="k">计次循环首</span><span class="w"><i> (</i></span><span class="c"><i>9</i></span><span class="w"><i>, s)</i></span></div><div class="cd" style="left:68px;top:607px"><span class="w"><i>G</i>启动<i> </i></span><span class="k">＝</span><span class="w"><i> </i></span><span class="f">取启动时间</span><span class="w"><i> ()</i></span></div><div class="cd" style="left:68px;top:625px"><span class="w"><i>ICO</i>数据<i> </i></span><span class="k">＝</span><span class="w"><i> ICO</i>数据<i> </i></span><span class="k">＋</span><span class="w"><i> </i></span><span class="f">多项选择</span><span class="w"><i> (s, </i></span><span class="c"><i>#ICO_256</i></span><span class="w"><i>, </i></span><span class="c"><i>#ICO_128</i></span><span class="w"><i>, </i></span><span class="c"><i>#ICO_96</i></span><span class="w"><i>, </i></span><span class="c"><i>#ICO_72</i></span><span class="w"><i>, </i></span><span class="c"><i>#ICO_64</i></span><span class="w"><i>, </i></span><span class="c"><i>#ICO_48</i></span><span class="w"><i>, </i></span><span class="c"><i>#ICO_32</i></span><span class="w"><i>, </i></span><span class="c"><i>#ICO_24</i></span><span class="w"><i>, </i></span><span class="c"><i>#ICO_16</i></span><span class="w"><i>)</i></span></div><div class="cd" style="left:68px;top:643px"><span class="w"><i>size </i></span><span class="k">＝</span><span class="w"><i> </i></span><span class="f">多项选择</span><span class="w"><i> (s, </i></span><span class="c"><i>256</i></span><span class="w"><i>, </i></span><span class="c"><i>128</i></span><span class="w"><i>, </i></span><span class="c"><i>96</i></span><span class="w"><i>, </i></span><span class="c"><i>72</i></span><span class="w"><i>, </i></span><span class="c"><i>64</i></span><span class="w"><i>, </i></span><span class="c"><i>48</i></span><span class="w"><i>, </i></span><span class="c"><i>32</i></span><span class="w"><i>, </i></span><span class="c"><i>24</i></span><span class="w"><i>, </i></span><span class="c"><i>16</i></span><span class="w"><i>)</i></span></div><div class="cd" style="left:68px;top:661px"><span class="w">缩略位图<i> </i></span><span class="k">＝</span><span class="w"><i> </i></span><span class="f">位图创建自像素格式</span><span class="w"><i> (size, size, </i></span><span class="c"><i>#</i>像素格式<i>_32bppARGB</i></span><span class="w"><i>)</i></span></div><div class="cd" style="left:68px;top:679px"><span class="w">缩略图形<i> </i></span><span class="k">＝</span><span class="w"><i> </i></span><span class="f">图形创建自位图</span><span class="w"><i> (</i>缩略位图<i>)</i></span></div><div class="cd" style="left:68px;top:697px"><span class="f">图形画位图缩放部分透明</span><span class="w"><i> (</i>缩略图形<i>, </i>临时位图<i>, </i></span><span class="c"><i>0</i></span><span class="w"><i>, </i></span><span class="c"><i>0</i></span><span class="w"><i>, size, size, </i></span><span class="c"><i>0</i></span><span class="w"><i>, </i></span><span class="c"><i>0</i></span><span class="w"><i>, , , )</i></span></div><div style="left:47px;top:490px;width:17px;height:1px;background:repeating-linear-gradient(90deg,#6f6e5f 0 3px,transparent 3px 5px)"></div><div style="left:47px;top:490px;width:1px;height:33px;background:repeating-linear-gradient(#6f6e5f 0 3px,transparent 3px 5px)"></div><div style="left:47px;top:523px;width:12px;height:1px;background:repeating-linear-gradient(90deg,#6f6e5f 0 3px,transparent 3px 5px)"></div><svg style="left:59px;top:520px" width="5" height="8" viewBox="0 0 5 8"><path d="M0 0l4.500 4-4.500 4z" fill="#6f6e5f"/></svg><div style="left:47px;top:531px;width:17px;height:1px;background:repeating-linear-gradient(90deg,#6f6e5f 0 3px,transparent 3px 5px)"></div><div style="left:47px;top:531px;width:1px;height:28px;background:repeating-linear-gradient(#6f6e5f 0 3px,transparent 3px 5px)"></div><div style="left:47px;top:559px;width:12px;height:1px;background:repeating-linear-gradient(90deg,#6f6e5f 0 3px,transparent 3px 5px)"></div><svg style="left:59px;top:556px" width="5" height="8" viewBox="0 0 5 8"><path d="M0 0l4.500 4-4.500 4z" fill="#6f6e5f"/></svg><div style="left:47px;top:567px;width:17px;height:1px;background:repeating-linear-gradient(90deg,#6f6e5f 0 3px,transparent 3px 5px)"></div><div style="left:47px;top:567px;width:1px;height:28px;background:repeating-linear-gradient(#6f6e5f 0 3px,transparent 3px 5px)"></div><div style="left:47px;top:595px;width:12px;height:1px;background:repeating-linear-gradient(90deg,#6f6e5f 0 3px,transparent 3px 5px)"></div><svg style="left:59px;top:592px" width="5" height="8" viewBox="0 0 5 8"><path d="M0 0l4.500 4-4.500 4z" fill="#6f6e5f"/></svg><div style="left:47px;top:603px;width:12px;height:1px;background:repeating-linear-gradient(90deg,#6f6e5f 0 3px,transparent 3px 5px)"></div><svg style="left:59px;top:600px" width="5" height="8" viewBox="0 0 5 8"><path d="M0 0l4.500 4-4.500 4z" fill="#6f6e5f"/></svg><div style="left:47px;top:603px;width:1px;height:111px;background:repeating-linear-gradient(#6f6e5f 0 3px,transparent 3px 5px)"></div></div>
<div class="trk" style="left:1901px;top:99px;width:18px;height:714px"></div><div class="sbb" style="left:1901px;top:99px;width:17px;height:7px"></div><div class="sbb" style="left:1901px;top:106px;width:17px;height:17px"><svg style="left:0;top:0" width="17" height="17"><path d="M5 10l3.500-4 3.500 4z" fill="#000"/></svg></div><div class="sbb" style="left:1901px;top:178px;width:17px;height:17px"></div><div class="sbb" style="left:1901px;top:796px;width:17px;height:17px"><svg style="left:0;top:0" width="17" height="17"><path d="M4.500 6.500l4 4 4-4z" fill="#000"/></svg></div><div style="left:1901px;top:813px;width:18px;height:17px;background:#f0f0f0"></div><div class="trk" style="left:230px;top:813px;width:1671px;height:17px"></div><div class="sbb" style="left:230px;top:813px;width:7px;height:17px"></div><div class="sbb" style="left:237px;top:813px;width:17px;height:17px"><svg style="left:0;top:0" width="17" height="17"><path d="M9 4.500l-4 4 4 4z" fill="#000"/></svg></div><div class="sbb" style="left:254px;top:813px;width:17px;height:17px"></div><div class="sbb" style="left:1884px;top:813px;width:17px;height:17px"><svg style="left:0;top:0" width="17" height="17"><path d="M6.500 4.500l4 4-4 4z" fill="#000"/></svg></div><div style="left:1918px;top:99px;width:1px;height:732px;background:#e3e3e3"></div><div style="left:1919px;top:98px;width:1px;height:733px;background:#fff"></div><div style="left:228px;top:830px;width:1691px;height:1px;background:#e3e3e3"></div><div style="left:228px;top:831px;width:1692px;height:1px;background:#fff"></div><div style="left:228px;top:832px;width:1691px;height:1px;background:#a0a0a0"></div><div style="left:229px;top:833px;width:1689px;height:1px;background:#696969"></div><div style="left:228px;top:832px;width:1px;height:20px;background:#a0a0a0"></div><div style="left:229px;top:833px;width:1px;height:19px;background:#696969"></div><div style="left:1918px;top:833px;width:1px;height:20px;background:#e3e3e3"></div><div style="left:1919px;top:832px;width:1px;height:22px;background:#fff"></div><svg style="left:229px;top:833px" width="260" height="20" viewBox="229 833 260 20"><path d="M414.500 834l9 17.500h51l9-17.500z" fill="#fff"/><path d="M230.500 834l9 17.500h84l3-6M322.500 834l9 17.500h84l3-6M414.500 834l9 17.500h51l9-17.500" fill="none" stroke="#000" stroke-width="1.100"/></svg><span class="etab" style="left:244px;color:#808000"><i>[</i>图片资源表<i>]</i></span><span class="etab" style="left:336px;color:#808000"><i>[</i>常量数据表<i>]</i></span><span class="etab" style="left:425px;color:#000;font-weight:bold">程序集<i>1</i></span><div class="hl" style="top:852px;background:#e3e3e3"></div><div class="hl" style="top:852px;background:#a0a0a0;width:230px"></div><div class="hl" style="top:853px;background:#fff"></div><div class="hl" style="top:857px;background:#a0a0a0"></div><div style="left:1912px;top:628px;width:8px;height:42px;border-radius:2px 0 0 2px;background:linear-gradient(#33363b 0 21px,#3f4246 21px)"><div style="left:3px;top:3px;width:2px;height:17px;background:#5f4a2c"></div><div style="left:3px;top:20px;width:2px;height:2px;background:#f9a825"></div><div style="left:3px;top:22px;width:2px;height:16px;background:#4c7a34"></div><div style="left:3px;top:38px;width:2px;height:2px;background:#7ae614"></div></div>
<div style="left:3px;top:862px;width:12px;height:11px;background:#f0f0f0;box-shadow:inset 1px 1px 0 #fff,inset -1px -1px 0 #a0a0a0"><svg style="left:0;top:0" width="12" height="11"><path d="M3.500 3l5.500 5.500M9 3l-5.500 5.500" stroke="#000" stroke-width="1.700"/></svg></div><div style="left:3px;top:875px;width:12px;height:12px;background:#f0f0f0;box-shadow:inset 1px 1px 0 #fff,inset -1px -1px 0 #a0a0a0"><svg style="left:0;top:0" width="12" height="12"><rect x="3.700" y="4.200" width="5" height="4.600" fill="none" stroke="#000" stroke-width="1.300"/><path d="M3 3.800h6.400" stroke="#000" stroke-width="1.600"/></svg></div><div style="left:7px;top:890px;width:2px;height:144px;background:#fff"></div><div style="left:9px;top:890px;width:1px;height:144px;background:#a0a0a0"></div><div style="left:7px;top:1033px;width:3px;height:1px;background:#a0a0a0"></div><div style="left:18px;top:882px;width:1898px;height:152px;background:#f0f0f0;box-shadow:inset 1px 1px 0 #fff,inset -1px -1px 0 #696969,inset -2px -2px 0 #a0a0a0"></div><div class="btab" style="left:21px;width:56px;box-shadow:inset 1px 1px 0 #fff"></div><span class="bt" style="left:48px;top:866px">提示</span><div class="btab" style="left:138px;width:68px"></div><span class="bt" style="left:164px;top:866px">调用表</span><div class="btab" style="left:206px;width:70px"></div><span class="bt" style="left:234px;top:866px">监视表</span><div class="btab" style="left:276px;width:70px"></div><span class="bt" style="left:304px;top:866px">变量表</span><div class="btab" style="left:346px;width:64px"></div><span class="bt" style="left:374px;top:866px">搜寻<i>1</i></span><div class="btab" style="left:410px;width:64px"></div><span class="bt" style="left:438px;top:866px">搜寻<i>2</i></span><div class="btab" style="left:474px;width:82px"></div><span class="bt" style="left:501px;top:866px">剪辑历史</span><div class="btab" style="left:556px;width:64px"></div><span class="bt" style="left:584px;top:866px"><i>Tools</i></span><div class="btab" style="left:77px;top:861px;width:61px;height:23px"></div><span class="bt" style="left:105px;top:864px">输出</span><div style="left:21px;top:887px;width:1892px;height:142px;background:#f0f0f0;box-shadow:inset 1px 1px 0 #a0a0a0,inset -1px -1px 0 #fff,inset 2px 2px 0 #696969,inset -2px -2px 0 #fff"></div><div id="out"><div class="ol" style="top:1px"><i>AppTip: APP</i>初始化完毕！<i> </i>多进程通讯初始化成功！<i> </i>等待加载子插件！<i> </i>当前易版本：<i>5.8 </i>官方<i>QQ</i>群：<i>572521856</i></div><div class="ol" style="top:14px"><i>AppTip: </i>载入完毕，成功加载<i> 9 </i>个应用，应用加载过程共耗时：<i>657ms.</i></div></div><div style="left:1893px;top:889px;width:18px;height:138px;background:#f0f0f0"><svg style="left:0;top:0" width="18" height="138"><path d="M5.500 12l3.500-3.500 3.500 3.500M5.500 126l3.500 3.500 3.500-3.500" fill="none" stroke="#bcbcbc" stroke-width="2"/></svg></div>
<svg style="left:27px;top:864px" width="15" height="18" viewBox="0 0 15 18"><text x="1.500" y="15.500" font-family="Liberation Sans,sans-serif" font-weight="bold" font-size="17.500" fill="#ffff00" stroke="#000" stroke-width="2.200" stroke-linejoin="round" paint-order="stroke">?</text></svg><svg style="left:86px;top:864px" width="12" height="13" viewBox="0 0 12 13"><rect x="0.600" y="0.600" width="10.800" height="11.600" fill="#fff" stroke="#000" stroke-width="1.200"/><rect x="4" y="1.200" width="7" height="1.300" fill="#0000ff"/><path d="M1 3h10" stroke="#000" stroke-width=".8"/><path d="M2.500 4.500h6.500M2.500 6.500h3.500M2.500 8.500h4.500M2.500 10.500h3" stroke="#000"/></svg><svg style="left:144px;top:866px" width="11" height="13" viewBox="0 0 11 13"><path d="M1.5 0v5M0 1.500h3M1.5 8v5M0 9.500h3" stroke="#000" stroke-width="1.100"/><path d="M0 6.500h3" stroke="#000080" stroke-width="1.100"/><path d="M5.5 0v5M4 1.500h3M5.5 8v5M4 9.500h3" stroke="#000" stroke-width="1.100"/><path d="M4 6.500h3" stroke="#000080" stroke-width="1.100"/><path d="M9.5 0v5M8 1.500h3M9.5 8v5M8 9.500h3" stroke="#000" stroke-width="1.100"/><path d="M8 6.500h3" stroke="#000080" stroke-width="1.100"/></svg><svg style="left:212px;top:864px" width="17" height="17" viewBox="0 0 17 17"><circle cx="6.500" cy="6.500" r="5.300" fill="#fafafa" stroke="#000" stroke-width="1.150"/><path d="M10.500 10.500l5 5" stroke="#000" stroke-width="2.200"/></svg><svg style="left:282px;top:867px" width="17" height="13" viewBox="0 0 17 13"><g transform="translate(0.500,0)"><path d="M4 0.500l4 4v3l-4 4-4-4v-3z" fill="#ffff00" stroke="#000" stroke-width="1.100"/><path d="M4 8.500l4-4v3l-4 4z" fill="#808000"/><path d="M0 4.500l4 4 4-4M4 8.500v3" fill="none" stroke="#000" stroke-width="1"/></g><g transform="translate(8.500,0)"><path d="M4 0.500l4 4v3l-4 4-4-4v-3z" fill="#fff" stroke="#000" stroke-width="1.100"/><path d="M4 8.500l4-4v3l-4 4z" fill="#c0c0c0"/><path d="M0 4.500l4 4 4-4M4 8.500v3" fill="none" stroke="#000" stroke-width="1"/></g></svg><svg style="left:352px;top:866px" width="17" height="15" viewBox="0 0 17 15"><rect x="0.700" y="0.700" width="10.500" height="11" fill="#fff" stroke="#000" stroke-width="1.300"/><path d="M2 2.500h3M2 4.500h2.500M2 6.500h2.500M2 8.500h2.500M2 10.500h3M6 2.500h4" stroke="#000"/><circle cx="8.300" cy="6.500" r="3.300" fill="#f0f0f0" stroke="#000" stroke-width="1"/><path d="M7.500 4.800h1.600M6.800 6.500h.8M9 6.500h.8M7.500 8.300h1.600" stroke="#808080" stroke-width=".8"/><path d="M11 9.500l4.300 4.200" stroke="#000" stroke-width="2.200"/></svg><svg style="left:416px;top:866px" width="17" height="15" viewBox="0 0 17 15"><rect x="0.700" y="0.700" width="10.500" height="11" fill="#fff" stroke="#000" stroke-width="1.300"/><path d="M2 2.500h3M2 4.500h2.500M2 6.500h2.500M2 8.500h2.500M2 10.500h3M6 2.500h4" stroke="#000"/><circle cx="8.300" cy="6.500" r="3.300" fill="#f0f0f0" stroke="#000" stroke-width="1"/><path d="M7.500 4.800h1.600M6.800 6.500h.8M9 6.500h.8M7.500 8.300h1.600" stroke="#808080" stroke-width=".8"/><path d="M11 9.500l4.300 4.200" stroke="#000" stroke-width="2.200"/></svg><svg style="left:483px;top:867px" width="12" height="13" viewBox="0 0 12 13"><rect x="0.600" y="0.600" width="10.300" height="11.500" rx="1" fill="#fff" stroke="#000" stroke-width="1.200"/><path d="M2.500 3.500h6M2.500 5.500h4M2.500 7.500h5M2.500 9.500h3" stroke="#000"/></svg><svg style="left:563px;top:867px" width="15" height="14" viewBox="0 0 15 14"><rect x="0.600" y="0.600" width="13.500" height="12.500" fill="#fff" stroke="#000" stroke-width="1.200"/><rect x="1.200" y="1.200" width="12.300" height="2.600" fill="#0000c0"/><path d="M3 6.500h1M6 6.500h1M9 6.500h1M3 9h1M6 9h1M9 9h1" stroke="#808080"/></svg>
<div class="hl" style="top:1038px;background:#a0a0a0"></div><div class="hl" style="top:1039px;background:#fff"></div><div style="left:0;top:1040px;width:1920px;height:8px;background:#f0f0f0;overflow:hidden"><div style="left:0;top:0;width:48px;height:8px;background:#23252d"></div><div style="left:48px;top:0;width:29px;height:8px;background:#424242"></div><span class="sb" style="left:80px">Hyper Text Markup Language file</span><span class="sb" style="left:935px;letter-spacing:.45px">length : 3,609</span><span class="sb" style="left:1030px;letter-spacing:.3px">lines : 43</span><span class="sb" style="left:1136px;letter-spacing:0">Ln : 1</span><span class="sb" style="left:1183px;letter-spacing:.05px">Col : 1</span><span class="sb" style="left:1236px;letter-spacing:.23px">Sel : 0 | 0</span><span class="sb" style="left:1397px;letter-spacing:.05px">Windows (CR LF)</span><span class="sb" style="left:1507px;letter-spacing:-.1px">UTF-8</span><span class="sb" style="left:1627px;letter-spacing:-.1px">INS</span><div style="left:931px;top:0;width:1px;height:8px;background:#a0a0a0"></div><div style="left:1131px;top:0;width:1px;height:8px;background:#a0a0a0"></div><div style="left:1391px;top:0;width:1px;height:8px;background:#a0a0a0"></div><div style="left:1501px;top:0;width:1px;height:8px;background:#a0a0a0"></div><div style="left:1622px;top:0;width:1px;height:8px;background:#a0a0a0"></div><div style="left:1651px;top:0;width:1px;height:8px;background:#a0a0a0"></div><div style="left:1672px;top:0;width:248px;height:8px;background:#414141"></div><span class="sb" style="left:1815px;top:2px;color:#fff;font-size:13px">21:18</span><div style="left:1915px;top:0;width:1px;height:8px;background:#8a8a8a"></div></div>
</body></html>
